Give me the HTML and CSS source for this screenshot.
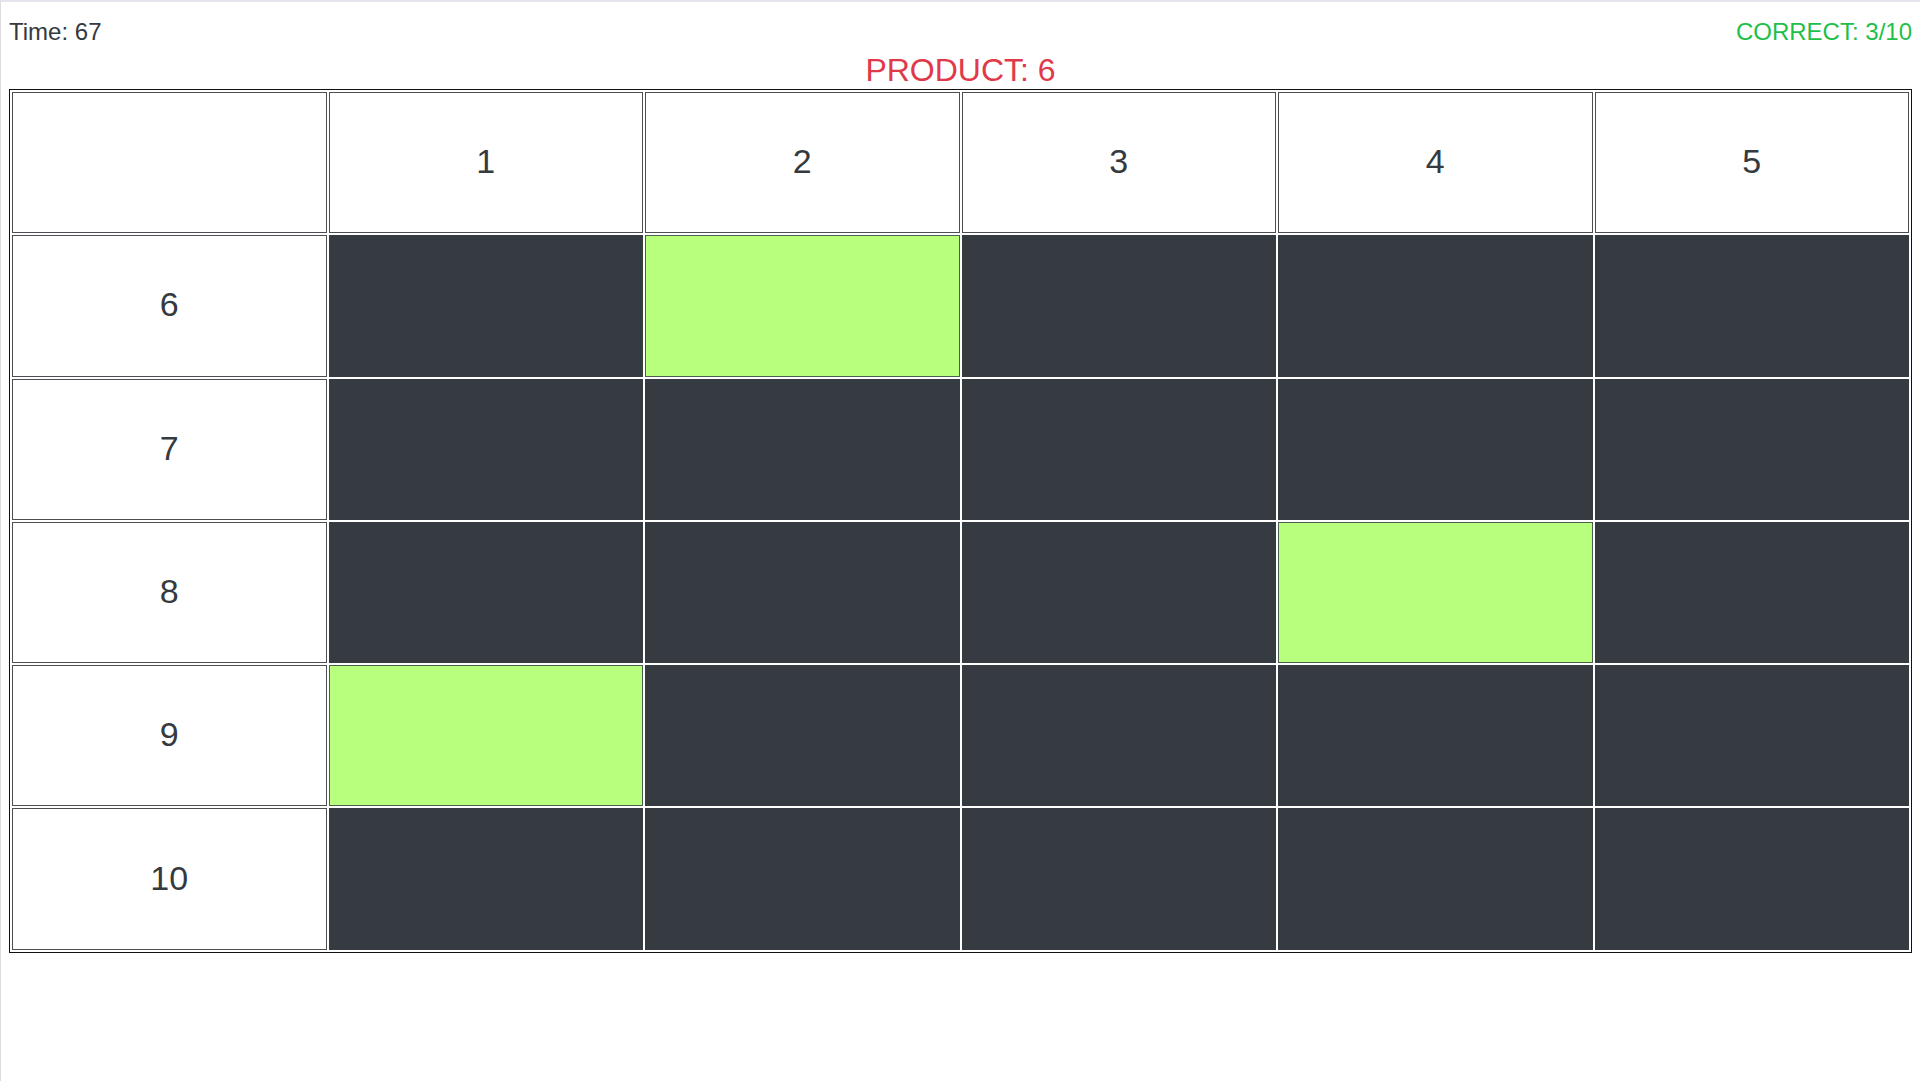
FILE: index.html
```html
<!DOCTYPE html>
<html lang="en">
<head>
<meta charset="utf-8">
<title>Multiplication</title>
<link rel="stylesheet" href="styles.css">
</head>
<body>
<header class="status">
  <span>Time: 67</span>
  <span class="correct">CORRECT: 3/10</span>
</header>
<main>
  <h1 class="product">PRODUCT: 6</h1>
  <table class="board">
    <tr><td></td><th scope="col">1</th><th scope="col">2</th><th scope="col">3</th><th scope="col">4</th><th scope="col">5</th></tr>
    <tr><th scope="row">6</th><td class="tile"></td><td class="tile found"></td><td class="tile"></td><td class="tile"></td><td class="tile"></td></tr>
    <tr><th scope="row">7</th><td class="tile"></td><td class="tile"></td><td class="tile"></td><td class="tile"></td><td class="tile"></td></tr>
    <tr><th scope="row">8</th><td class="tile"></td><td class="tile"></td><td class="tile"></td><td class="tile found"></td><td class="tile"></td></tr>
    <tr><th scope="row">9</th><td class="tile found"></td><td class="tile"></td><td class="tile"></td><td class="tile"></td><td class="tile"></td></tr>
    <tr><th scope="row">10</th><td class="tile"></td><td class="tile"></td><td class="tile"></td><td class="tile"></td><td class="tile"></td></tr>
  </table>
</main>
</body>
</html>
```
FILE: styles.css
```css
* {
  box-sizing: border-box;
}

html {
  min-height: 100vh;
  border-top: 2px solid #e4e4ec;
  border-left: 1px solid #dcdcdf;
  background: #fff;
}

body {
  margin: 0;
  padding: 16px 8px 0;
  font-family: "Liberation Sans", Arial, sans-serif;
  color: #343a40;
}

.status {
  display: flex;
  justify-content: space-between;
  font-size: 24px;
  line-height: 28px;
}

.correct {
  color: #1fc04a;
}

.product {
  margin: 6px 0 0;
  font-size: 32px;
  font-weight: 400;
  line-height: 37px;
  text-align: center;
  color: #e03a4a;
}

.board {
  width: 100%;
  height: calc(80vh - 1px);
  table-layout: fixed;
  border: 1px solid #111;
  border-spacing: 2px;
}

.board th,
.board td {
  padding: 0 0 2px;
  border: 1px solid #4b4f54;
  font-size: 34px;
  font-weight: 400;
  text-align: center;
}

.board .tile {
  border-color: #363a41;
  background: #363a41;
}

.board .found {
  border-color: #4b5f4f;
  background: #b8ff7e;
}
```
